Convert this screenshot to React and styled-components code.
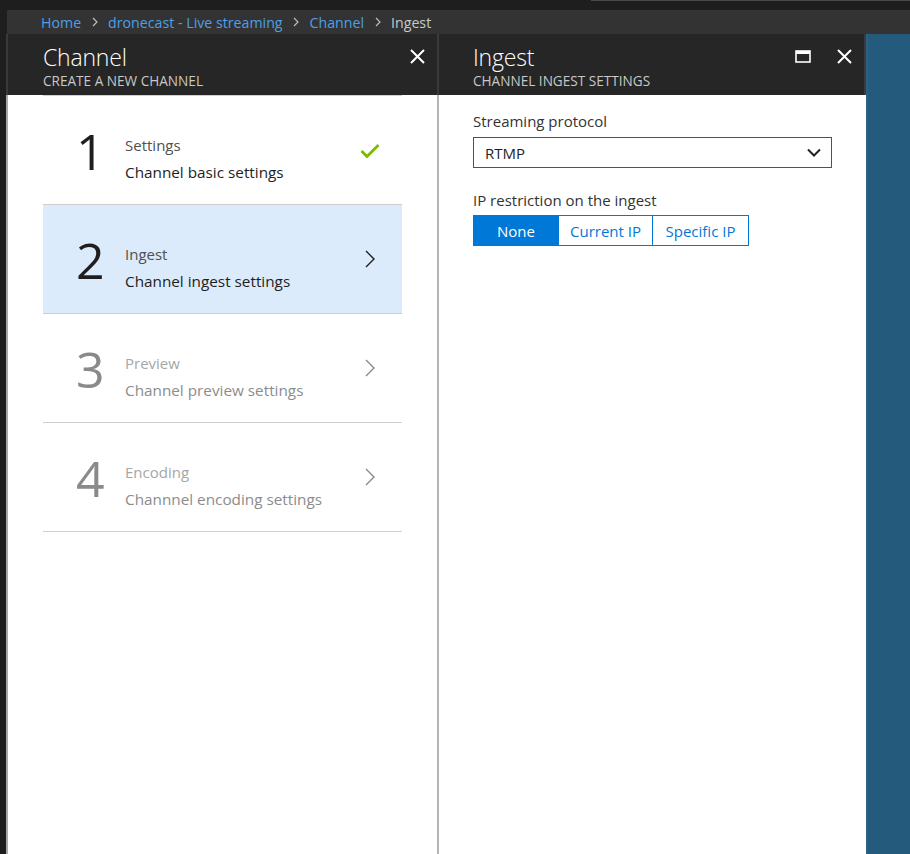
import React from "react";
import styled, { createGlobalStyle } from "styled-components";

const Global = createGlobalStyle`
  html, body { margin: 0; padding: 0; background: #1e1e1e; }
  body { font-family: "Open Sans", "Noto Sans", sans-serif; width: 910px; height: 854px; overflow: hidden; }
  * { box-sizing: border-box; }
`;

const Page = styled.div`
  display: flex;
  flex-direction: column;
  width: 910px;
  height: 854px;
  background: #1e1e1e;
`;

const TopStrip = styled.div`
  height: 10px;
  display: flex;
  justify-content: flex-end;
`;

const TopLine = styled.div`
  width: 319px;
  height: 1px;
  background: #4a4a4a;
`;

const Breadcrumbs = styled.nav`
  height: 24px;
  margin-left: 7px;
  background: #333333;
  display: flex;
  align-items: center;
  padding-left: 34px;
  gap: 9.5px;
  font-size: 14.2px;
`;

const Crumb = styled.span`
  color: ${(p) => (p.$current ? "#c9c9c9" : "#4ba0e8")};
  white-space: nowrap;
`;

const Sep = styled.svg`
  width: 6px;
  height: 10px;
  margin: 0 1px;
`;

const Main = styled.div`
  flex: 1;
  display: flex;
  padding-left: 6px;
  min-height: 0;
`;

const Blade = styled.section`
  width: ${(p) => p.$width}px;
  display: flex;
  flex-direction: column;
`;

const BladeHeader = styled.header`
  height: 61px;
  background: #262626;
  border-left: ${(p) => (p.$left ? "2px solid #3a3a3a" : "none")};
  border-right: 2px solid #3a3a3a;
  padding: 9px 12px 0 ${(p) => p.$pad}px;
  display: flex;
  justify-content: space-between;
  align-items: flex-start;
`;

const TitleBlock = styled.div`
  display: flex;
  flex-direction: column;
`;

const Title = styled.h1`
  margin: 0;
  font-size: 23px;
  font-weight: 300;
  line-height: 28px;
  color: #ffffff;
  letter-spacing: -0.2px;
`;

const Subtitle = styled.div`
  font-size: 13.6px;
  line-height: 16px;
  color: #c8c8c8;
  text-transform: uppercase;
  margin-top: 2px;
`;

const HeaderActions = styled.div`
  display: flex;
  align-items: center;
  gap: 25px;
  padding-top: 5px;
`;

const IconButton = styled.button`
  background: none;
  border: none;
  padding: 0;
  width: 16px;
  height: 16px;
  display: flex;
  align-items: center;
  justify-content: center;
  cursor: pointer;
`;

const BladeBody = styled.div`
  flex: 1;
  background: #ffffff;
  border-left: ${(p) => (p.$left ? "2px solid #a8a8a8" : "none")};
  border-right: ${(p) => (p.$right ? "2px solid #b4b4b4" : "none")};
  padding: 0 ${(p) => p.$padR}px 0 ${(p) => p.$pad}px;
`;

const StepList = styled.ul`
  list-style: none;
  margin: 0;
  padding: 0;
  border-top: 1px solid #d0d0d0;
`;

const Step = styled.li`
  height: 109px;
  border-bottom: 1px solid #cfcfcf;
  background: ${(p) => (p.$active ? "#dcebfb" : "#ffffff")};
  display: flex;
  align-items: center;
  padding: 0 22px 0 33px;
`;

const StepNumber = styled.div`
  width: 49px;
  font-size: 50px;
  line-height: 50px;
  font-weight: 400;
  color: ${(p) => (p.$muted ? "#8a8a8a" : "#1e1e1e")};
  margin-top: 2px;
`;

const StepText = styled.div`
  flex: 1;
  display: flex;
  flex-direction: column;
  padding-top: 17px;
`;

const StepTitle = styled.div`
  font-size: 15px;
  line-height: 20px;
  color: ${(p) => (p.$muted ? "#a6a6a6" : "#505050")};
`;

const StepDesc = styled.div`
  font-size: 15.3px;
  line-height: 20px;
  margin-top: 7px;
  color: ${(p) => (p.$muted ? "#8c8c8c" : "#1e1e1e")};
`;

const StepIcon = styled.div`
  width: 20px;
  display: flex;
  justify-content: center;
  margin-top: ${(p) => p.$offset || 0}px;
`;

const Form = styled.div`
  padding-top: 16px;
  display: flex;
  flex-direction: column;
`;

const Label = styled.label`
  font-size: 15px;
  line-height: 20px;
  color: #333333;
  margin-bottom: ${(p) => p.$mb || 6}px;
`;

const Select = styled.div`
  width: 359px;
  height: 31px;
  border: 1px solid #1d5d98;
  display: flex;
  align-items: center;
  justify-content: space-between;
  padding: 0 10px 0 11px;
  font-size: 15px;
  color: #1e1e1e;
  margin-bottom: 22px;
`;

const Segmented = styled.div`
  display: flex;
`;

const Segment = styled.button`
  height: 31px;
  width: ${(p) => p.$w}px;
  border: 1px solid #0078d7;
  margin-left: ${(p) => (p.$first ? 0 : -1)}px;
  background: ${(p) => (p.$selected ? "#0078d7" : "#ffffff")};
  color: ${(p) => (p.$selected ? "#ffffff" : "#0078d7")};
  font-family: "Open Sans", "Noto Sans", sans-serif;
  font-size: 15px;
  padding: 0;
  cursor: pointer;
`;

const BlueStrip = styled.div`
  flex: 1;
  background: #245a7c;
  border-left: 2px solid #2a6184;
`;

const CloseIcon = () => (
  <svg width="15" height="15" viewBox="0 0 15 15">
    <path d="M1 1 L14 14 M14 1 L1 14" stroke="#ffffff" strokeWidth="2" fill="none" />
  </svg>
);

const MaxIcon = () => (
  <svg width="16" height="13" viewBox="0 0 16 13">
    <rect x="1" y="1" width="14" height="11" stroke="#ffffff" strokeWidth="1.6" fill="none" />
    <rect x="1" y="1" width="14" height="3" fill="#ffffff" />
  </svg>
);

const Check = () => (
  <svg width="20" height="16" viewBox="0 0 20 16">
    <path d="M1.5 8 L7 13.5 L18.5 2" stroke="#7cba00" strokeWidth="2.8" fill="none" />
  </svg>
);

const Chevron = ({ color }) => (
  <svg width="10" height="18" viewBox="0 0 10 18">
    <path d="M1 1 L9 9 L1 17" stroke={color} strokeWidth="1.4" fill="none" />
  </svg>
);

const ChevronDown = () => (
  <svg width="14" height="9" viewBox="0 0 14 9">
    <path d="M1 1.5 L7 7.5 L13 1.5" stroke="#222222" strokeWidth="2" fill="none" />
  </svg>
);

const CrumbSep = () => (
  <Sep viewBox="0 0 6 10">
    <path d="M1 1 L5 5 L1 9" stroke="#bdbdbd" strokeWidth="1.2" fill="none" />
  </Sep>
);

const steps = [
  { n: "1", title: "Settings", desc: "Channel basic settings", state: "done" },
  { n: "2", title: "Ingest", desc: "Channel ingest settings", state: "active" },
  { n: "3", title: "Preview", desc: "Channel preview settings", state: "todo" },
  { n: "4", title: "Encoding", desc: "Channnel encoding settings", state: "todo" },
];

export default function App() {
  return (
    <Page>
      <Global />
      <TopStrip>
        <TopLine />
      </TopStrip>
      <Breadcrumbs>
        <Crumb>Home</Crumb>
        <CrumbSep />
        <Crumb>dronecast - Live streaming</Crumb>
        <CrumbSep />
        <Crumb>Channel</Crumb>
        <CrumbSep />
        <Crumb $current>Ingest</Crumb>
      </Breadcrumbs>
      <Main>
        <Blade $width={433}>
          <BladeHeader $left $pad={35}>
            <TitleBlock>
              <Title>Channel</Title>
              <Subtitle>Create a new channel</Subtitle>
            </TitleBlock>
            <HeaderActions>
              <IconButton aria-label="Close"><CloseIcon /></IconButton>
            </HeaderActions>
          </BladeHeader>
          <BladeBody $left $right $pad={35} $padR={35}>
            <StepList>
              {steps.map((s) => {
                const muted = s.state === "todo";
                return (
                  <Step key={s.n} $active={s.state === "active"}>
                    <StepNumber $muted={muted}>{s.n}</StepNumber>
                    <StepText>
                      <StepTitle $muted={muted}>{s.title}</StepTitle>
                      <StepDesc $muted={muted}>{s.desc}</StepDesc>
                    </StepText>
                    <StepIcon $offset={s.state === "done" ? 2 : 0}>
                      {s.state === "done" ? (
                        <Check />
                      ) : (
                        <Chevron color={muted ? "#8a8a8a" : "#1e1e1e"} />
                      )}
                    </StepIcon>
                  </Step>
                );
              })}
            </StepList>
          </BladeBody>
        </Blade>
        <Blade $width={427}>
          <BladeHeader $pad={34}>
            <TitleBlock>
              <Title>Ingest</Title>
              <Subtitle>Channel ingest settings</Subtitle>
            </TitleBlock>
            <HeaderActions>
              <IconButton aria-label="Maximize"><MaxIcon /></IconButton>
              <IconButton aria-label="Close"><CloseIcon /></IconButton>
            </HeaderActions>
          </BladeHeader>
          <BladeBody $pad={34} $padR={34}>
            <Form>
              <Label>Streaming protocol</Label>
              <Select>
                <span>RTMP</span>
                <ChevronDown />
              </Select>
              <Label $mb={5}>IP restriction on the ingest</Label>
              <Segmented>
                <Segment $first $selected $w={86}>None</Segment>
                <Segment $w={95}>Current IP</Segment>
                <Segment $w={97}>Specific IP</Segment>
              </Segmented>
            </Form>
          </BladeBody>
        </Blade>
        <BlueStrip />
      </Main>
    </Page>
  );
}
